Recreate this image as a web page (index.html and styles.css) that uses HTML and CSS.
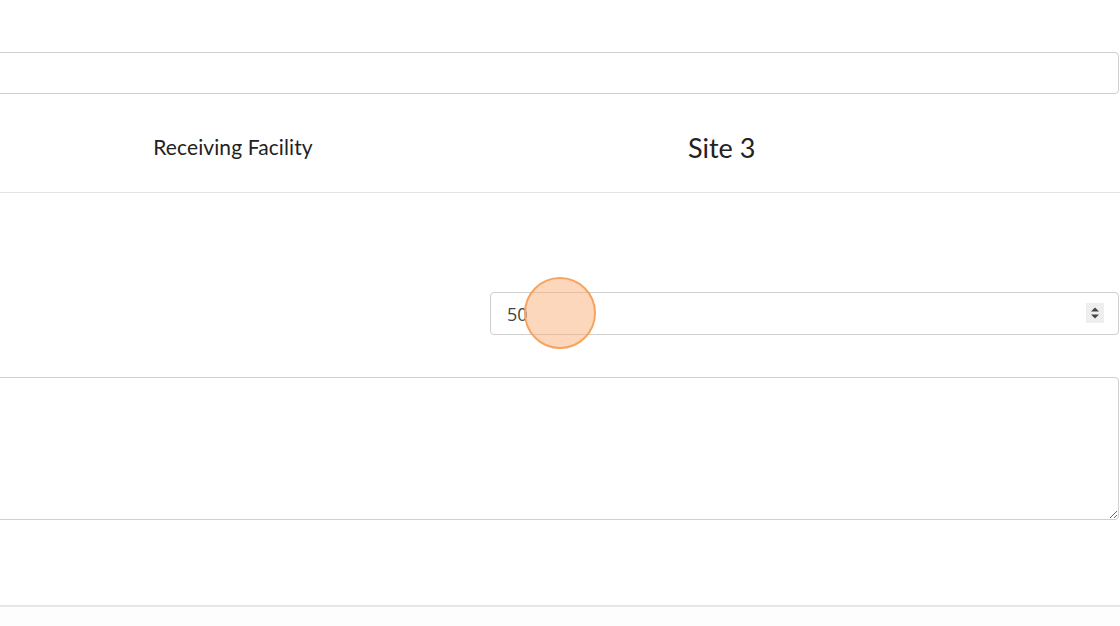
FILE: index.html
```html
<!DOCTYPE html>
<html>
<head>
<meta charset="utf-8">
<link rel="stylesheet" href="styles.css">
</head>
<body>
<div class="page">
  <div class="sheet">
    <div class="field-top"><input class="text-input" type="text"></div>
    <div class="row head-row">
      <div class="cell-label">Receiving Facility</div>
      <div class="cell-value site">Site 3</div>
    </div>
    <div class="row qty-row">
      <div class="cell-label"></div>
      <div class="cell-input">
        <div class="num-wrap">
          <input class="num-input" type="text" value="50">
          <span class="spinner">
            <svg width="18" height="20" viewBox="0 0 18 20"><rect width="18" height="20" fill="#eeeeee"/><path d="M5 8.5 L9 4.5 L13 8.5 Z" fill="#444"/><path d="M5 11.5 L9 15.5 L13 11.5 Z" fill="#444"/></svg>
          </span>
        </div>
      </div>
    </div>
    <div class="notes"><textarea class="notes-area"></textarea></div>
    <div class="footer-rule"></div>
    <div class="footer"></div>
  </div>
  <div class="cursor-dot"></div>
</div>
</body>
</html>
```

FILE: styles.css
```css
html, body {
  margin: 0;
  padding: 0;
  background: #fff;
  overflow: hidden;
}
.page {
  position: relative;
  width: 1120px;
  height: 626px;
  overflow: hidden;
  font-family: "Open Sans", "Liberation Sans", sans-serif;
  color: #222;
}
.sheet {
  margin-left: -200px;
  width: 1320px;
  padding-top: 52px;
}
.field-top {
  height: 42px;
}
.text-input {
  box-sizing: border-box;
  width: 1319px;
  height: 42px;
  border: 1px solid #cfcfcf;
  border-radius: 4px;
  margin: 0;
  background: #fff;
}
.row {
  display: flex;
}
.head-row {
  height: 98px;
  border-bottom: 1px solid #e3e3e3;
  align-items: center;
}
.cell-label {
  box-sizing: border-box;
  width: 666px;
  padding-left: 200px;
  text-align: center;
  font-family: "Lato", "Liberation Sans", sans-serif;
  font-size: 21px;
  letter-spacing: 0.1px;
  color: #222;
  padding-top: 6px;
}
.site {
  padding-left: 222px;
  font-family: "Lato", "Liberation Sans", sans-serif;
  font-size: 27px;
  color: #222;
  padding-top: 8px;
}
.qty-row {
  height: 184px;
}
.qty-row .cell-label {
  width: 690px;
}
.cell-input {
  padding-top: 99px;
}
.num-wrap {
  position: relative;
  width: 629px;
  height: 43px;
}
.num-input {
  box-sizing: border-box;
  width: 629px;
  height: 43px;
  border: 1px solid #cfcfcf;
  border-radius: 4px;
  margin: 0;
  padding: 0 16px;
  font-family: "Open Sans", "Liberation Sans", sans-serif;
  font-size: 18px;
  color: #444;
  background: #fff;
}
.spinner {
  position: absolute;
  left: 596px;
  top: 11px;
  width: 18px;
  height: 20px;
  display: block;
}
.spinner svg {
  display: block;
}
.notes {
  height: 143px;
}
.notes-area {
  box-sizing: border-box;
  display: block;
  width: 1319px;
  height: 143px;
  border: 1px solid #cfcfcf;
  border-radius: 4px;
  margin: 0;
  background: #fff;
  resize: vertical;
}
.footer-rule {
  margin-top: 85px;
  height: 0;
  border-top: 2px solid #e6e6e6;
}
.footer {
  height: 40px;
  background: #fdfdfd;
}
.cursor-dot {
  position: absolute;
  left: 524px;
  top: 277px;
  width: 68px;
  height: 68px;
  border-radius: 50%;
  background: rgba(252, 175, 120, 0.5);
  border: 2px solid #f6a45e;
}
```
